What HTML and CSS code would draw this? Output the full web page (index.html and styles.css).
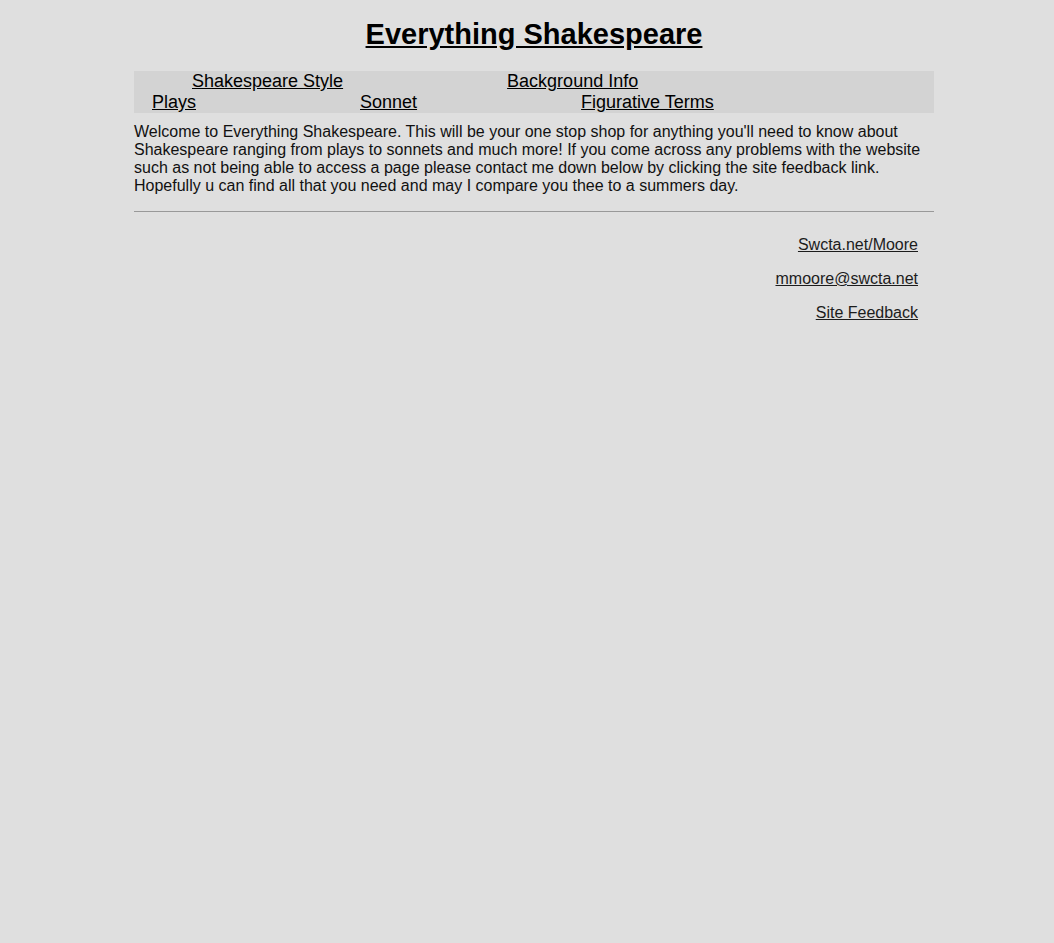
FILE: index.html
```html
<!DOCTYPE html>
<html>
<head>
<meta charset="utf-8">
<title>Everything Shakespeare</title>
<link rel="stylesheet" href="styles.css">
</head>
<body>
<div class="page">
  <h1 class="title"><a href="#">Everything Shakespeare</a></h1>
  <nav class="nav">
    <div class="nav-row row-one">
      <a href="#">Shakespeare Style</a>
      <a href="#">Background Info</a>
    </div>
    <div class="nav-row row-two">
      <a href="#">Plays</a>
      <a href="#">Sonnet</a>
      <a href="#">Figurative Terms</a>
    </div>
  </nav>
  <p class="intro">Welcome to Everything Shakespeare. This will be your one stop shop for anything you'll need to know about Shakespeare ranging from plays to sonnets and much more! If you come across any problems with the website such as not being able to access a page please contact me down below by clicking the site feedback link. Hopefully u can find all that you need and may I compare you thee to a summers day.</p>
  <hr class="rule">
  <footer class="footer">
    <a href="#">Swcta.net/Moore</a>
    <a href="#">mmoore@swcta.net</a>
    <a href="#">Site Feedback</a>
  </footer>
</div>
</body>
</html>
```
FILE: styles.css
```css
html, body {
  margin: 0;
  padding: 0;
  background: #dfdfdf;
}
body {
  font-family: "Liberation Sans", Arial, sans-serif;
  color: #111;
  padding-left: 14px;
}
.page {
  width: 800px;
  margin: 0 auto;
  padding-top: 16px;
}
.title {
  margin: 0;
  text-align: center;
  font-size: 29px;
  line-height: 36px;
  font-weight: bold;
}
.title a {
  color: #000;
  text-decoration: underline;
}
.nav {
  margin-top: 19px;
  background: #d3d3d3;
  display: flex;
  flex-direction: column;
}
.nav-row {
  display: flex;
  gap: 164px;
  font-size: 18px;
  line-height: 21px;
}
.nav-row a {
  color: #000;
  text-decoration: underline;
}
.row-one { padding-left: 58px; }
.row-two { padding-left: 18px; }
.intro {
  margin: 10px 0 0;
  font-size: 16px;
  line-height: 18px;
  color: #111;
}
.rule {
  margin: 16px 0 0;
  border: 0;
  border-top: 1px solid #999;
  height: 0;
}
.footer {
  display: flex;
  flex-direction: column;
  align-items: flex-end;
  gap: 16px;
  padding: 24px 16px 0 0;
}
.footer a {
  font-size: 16px;
  line-height: 18px;
  color: #1c1c1c;
  text-decoration: underline;
}
```
